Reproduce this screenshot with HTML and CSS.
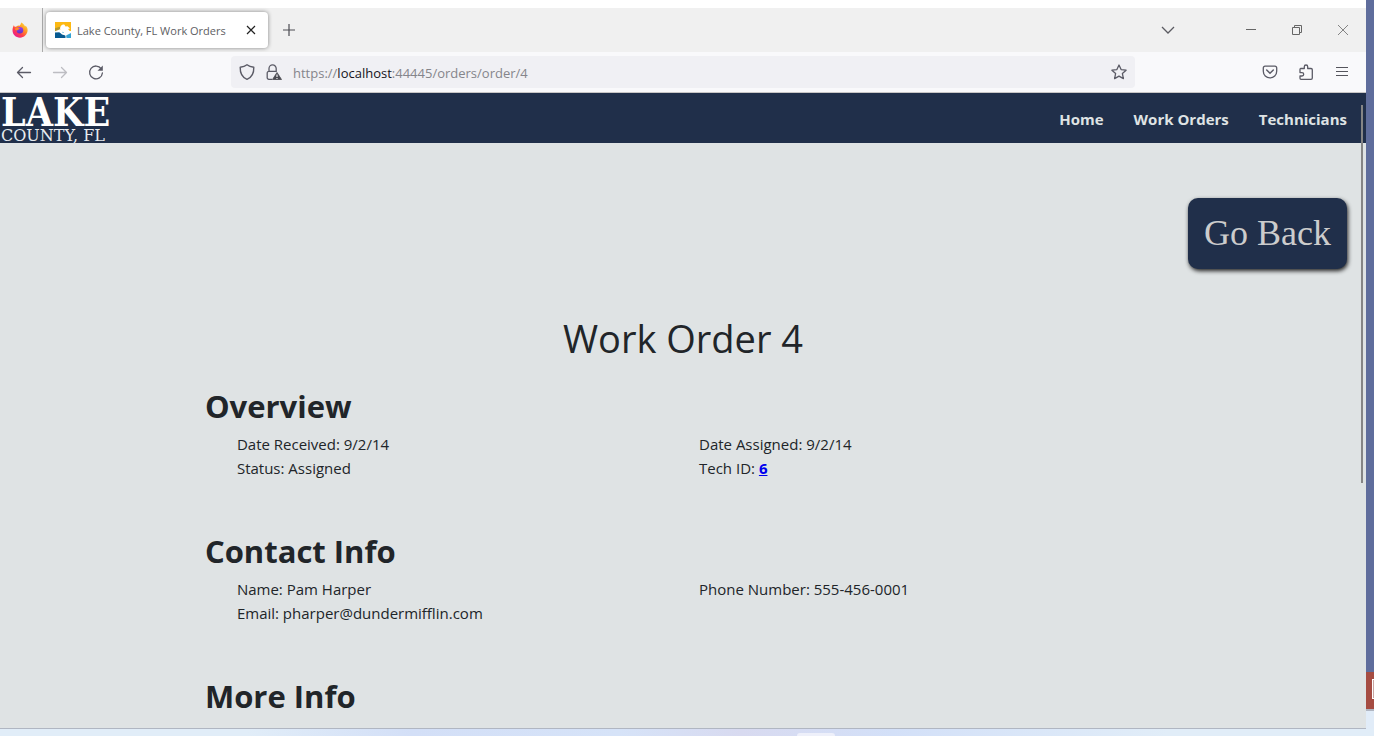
FILE: index.html
```html
<!DOCTYPE html>
<html lang="en">
<head>
<meta charset="utf-8">
<title>Lake County, FL Work Orders</title>
<link rel="stylesheet" href="styles.css">
</head>
<body>
<div class="desktop">
  <div class="browser">
    <div class="tabs">
      <button class="pinned" aria-label="Firefox view">
        <svg width="16" height="16" viewBox="0 0 16 16">
          <defs>
            <linearGradient id="flame" x1="1" y1="0" x2="0.2" y2="1"><stop offset="0" stop-color="#fff04a"/><stop offset=".4" stop-color="#ff9a22"/><stop offset=".7" stop-color="#ff3d4d"/><stop offset="1" stop-color="#e5169b"/></linearGradient>
            <linearGradient id="globe" x1="0" y1="0" x2="0" y2="1"><stop offset="0" stop-color="#a43be8"/><stop offset="1" stop-color="#5a35c9"/></linearGradient>
          </defs>
          <path d="M1.8 3.2 2.9 5 5 4.3 6 3.500 7.500 3.700 8.500 2.500 9.200.4C11 1.300 12.400 2.800 13 4.400L13.800 3.800C15.200 5.300 15.700 7 15.600 8.600 15.300 12.700 12 15.700 8 15.700 3.800 15.700.500 12.500.500 8.300.500 6.300 1 4.800 1.800 3.200Z" fill="url(#flame)"/>
          <circle cx="7.900" cy="8.200" r="3.300" fill="url(#globe)"/>
          <path d="M3.200 6.200 5.500 5.500 8 6.600 6.500 7.600 5 8.500 3.200 8Z" fill="#ff8b25"/>
        </svg>
      </button>
      <div class="tab">
        <svg width="16" height="16" viewBox="0 0 16 16">
          <path d="M0 0h16v16H0Z" fill="#fdb913"/>
          <path d="M0 7.500 5 7 8 9 16 9v7H0Z" fill="#fff"/>
          <path d="M0 6.200 4.500 4.800 6 6 4.500 7.500 0 9.200Z" fill="#b79a2b"/>
          <path d="M0 10.500 4.500 10.300 7 12.500 10.500 13.500V16H0Z" fill="#075a91"/>
          <path d="M11 13.500 16 11v5h-4.500Z" fill="#35a3d5"/>
          <path d="M5 6.500C5.500 3.500 7.500 2 9.500 2.800L10.500 4.500 12.500 4.300 15 6.500 13 7 15.500 10 12.500 9.500 11 14 8.500 11 4.500 10.500 6.500 8.500Z" fill="#fff"/>
          <path d="M7 9.800 9 10.200 8 11Z" fill="#35a3d5"/>
        </svg>
        <span class="tab-title">Lake County, FL Work Orders</span>
        <button class="close" aria-label="Close tab"><svg width="10" height="10" viewBox="0 0 10 10"><path d="M1 1l8 8M9 1 1 9" stroke="#222" stroke-width="1.200"/></svg></button>
      </div>
      <button class="new-tab" aria-label="New tab"><svg width="12" height="12" viewBox="0 0 12 12"><path d="M6 0v12M0 6h12" stroke="#4c4c53" stroke-width="1.200"/></svg></button>
      <div class="window-controls">
        <button class="all-tabs" aria-label="List all tabs"><svg width="14" height="14" viewBox="0 0 14 14"><path d="m1 4 6 6 6-6" fill="none" stroke="#5b5b62" stroke-width="1.300"/></svg></button>
        <button aria-label="Minimize"><svg width="10" height="10" viewBox="0 0 10 10"><path d="M0 4.500h10" stroke="#666"/></svg></button>
        <button aria-label="Restore"><svg width="10" height="10" viewBox="0 0 10 10"><path d="M.5 2.500h7v7h-7ZM2.500 2.500v-2h7v7h-2" fill="none" stroke="#666"/></svg></button>
        <button aria-label="Close window"><svg width="10" height="10" viewBox="0 0 10 10"><path d="m0 0 10 10M10 0 0 10" stroke="#777" stroke-width=".9"/></svg></button>
      </div>
    </div>
    <div class="toolbar">
      <div class="history">
        <button aria-label="Back"><svg width="16" height="16" viewBox="0 0 16 16"><path d="M14.500 8.500H1.500M6.500 3.500 1.500 8.500 6.500 13.500" fill="none" stroke="#5b5b66" stroke-width="1.300" stroke-linecap="round" stroke-linejoin="round"/></svg></button>
        <button aria-label="Forward" disabled><svg width="16" height="16" viewBox="0 0 16 16"><path d="M1.500 8.500h13M9.500 3.500 14.500 8.500 9.500 13.500" fill="none" stroke="#bdbdc2" stroke-width="1.300" stroke-linecap="round" stroke-linejoin="round"/></svg></button>
        <button aria-label="Reload"><svg width="16" height="16" viewBox="0 0 16 16"><path d="M13.300 4.800A6.400 6.400 0 1 0 14.400 9" fill="none" stroke="#5b5b66" stroke-width="1.300" stroke-linecap="round"/><path d="M14.800 1.500v5.300H9.500Z" fill="#5b5b66"/></svg></button>
      </div>
      <div class="address">
        <svg width="16" height="16" viewBox="0 0 16 16"><path d="M8 .800C6 2.300 3.800 2.900 1.200 3.200 1 9.500 3 13.300 8 15.300 13 13.300 15 9.500 14.800 3.200 12.200 2.900 10 2.300 8 .800Z" fill="none" stroke="#5b5b66" stroke-width="1.400" stroke-linejoin="round"/></svg>
        <svg class="lock" width="16" height="16" viewBox="0 0 16 16"><path d="M6 15.300H2.800A1.600 1.600 0 0 1 1.200 13.700V9A1.600 1.600 0 0 1 2.800 7.400H10M3 7.400V4.500a3.600 3.600 0 0 1 7.200 0V8" fill="none" stroke="#5b5b66" stroke-width="1.300"/><path d="M11 8.500 15.500 15.500H6.500Z" fill="#4b4b52" stroke="#4b4b52" stroke-linejoin="round" stroke-width=".8"/><path d="M11 10.500v2.500M11 14v1" stroke="#fff" stroke-width="1.100"/></svg>
        <a class="url" href="#">https://<b>localhost</b>:44445/orders/order/4</a>
        <button class="star" aria-label="Bookmark this page"><svg width="16" height="16" viewBox="0 0 16 16"><path d="m8 1 2.100 4.600 5 .600-3.700 3.400 1 5L8 12.100l-4.400 2.500 1-5L.900 6.200l5-.6Z" fill="none" stroke="#5b5b66" stroke-width="1.300" stroke-linejoin="round"/></svg></button>
      </div>
      <div class="tools">
        <button aria-label="Save to Pocket"><svg width="16" height="16" viewBox="0 0 16 16"><path d="M3 2.200h10a1.700 1.700 0 0 1 1.700 1.700v3.300a6.700 6.700 0 0 1-13.400 0V3.900A1.700 1.700 0 0 1 3 2.200Z" fill="none" stroke="#5b5b66" stroke-width="1.300"/><path d="M4.700 6 8 9.200 11.300 6" fill="none" stroke="#5b5b66" stroke-width="1.500" stroke-linecap="round"/></svg></button>
        <button aria-label="Extensions"><svg width="16" height="16" viewBox="0 0 16 16"><path d="M2.500 4.500H6.300V2.700a1.700 1.700 0 0 1 3.400 0V4.500H13a1.300 1.300 0 0 1 1.300 1.300v8.200a1.300 1.300 0 0 1-1.300 1.300H3a1 1 0 0 1-1-1V12H4a1.700 1.700 0 0 0 0-3.400H2V5.500a.8.800 0 0 1 .5-1Z" fill="none" stroke="#5b5b66" stroke-width="1.300" stroke-linejoin="round"/></svg></button>
        <button aria-label="Menu"><svg width="12" height="12" viewBox="0 0 12 12"><path d="M0 1.500h12M0 5.500h12M0 9.500h12" stroke="#55555c" stroke-width="1.200"/></svg></button>
      </div>
    </div>
    <div class="page">
      <header class="site-header">
        <a class="logo" href="#" aria-label="Lake County, FL">
          <svg width="112" height="50" viewBox="0 0 112 50">
            <text class="logo-name" x="1" y="33">LAKE</text>
            <text class="logo-place" x="1" y="48">COUNTY, FL</text>
          </svg>
        </a>
        <nav class="site-nav"><a href="#">Home</a><a href="#">Work Orders</a><a href="#">Technicians</a></nav>
      </header>
      <main>
        <div class="actions"><button class="go-back">Go Back</button></div>
        <h1>Work Order 4</h1>
        <div class="order">
          <section>
            <h2>Overview</h2>
            <div class="fields"><span>Date Received: 9/2/14</span><span>Date Assigned: 9/2/14</span><span>Status: Assigned</span><span>Tech ID: <a href="#">6</a></span></div>
          </section>
          <section>
            <h2>Contact Info</h2>
            <div class="fields"><span>Name: Pam Harper</span><span>Phone Number: 555-456-0001</span><span>Email: pharper@dundermifflin.com</span></div>
          </section>
          <section><h2>More Info</h2></section>
        </div>
      </main>
      <div class="scroll-thumb"></div>
    </div>
  </div>
  <div class="behind"><div class="behind-red"><i></i></div></div>
  <div class="taskbar"><div class="task-item"></div></div>
</div>
</body>
</html>
```
FILE: styles.css
```css
* { box-sizing: border-box; }
body { margin: 0; font-family: "Open Sans", "Noto Sans", sans-serif; color: #212529; }
button { border: 0; padding: 0; background: none; font: inherit; color: inherit; display: flex; align-items: center; justify-content: center; }
svg { display: block; flex: none; overflow: visible; }

.desktop {
  height: 100vh;
  display: grid;
  grid-template: minmax(0, 1fr) 7px / minmax(0, 1fr) 8px;
  background: #fff;
  overflow: hidden;
}
.browser { display: flex; flex-direction: column; margin-top: 8px; border-bottom: 1px solid #b0b6c2; }

.tabs { flex: none; height: 44px; display: flex; align-items: center; background: #f0f0f0; }
.pinned { width: 43px; height: 44px; padding-right: 3px; border-right: 1px solid #aaa; }
.tab {
  display: flex;
  align-items: center;
  gap: 6px;
  width: 222px;
  height: 36px;
  margin-left: 3px;
  padding: 0 7px 0 9px;
  background: #fff;
  border-radius: 4px;
  box-shadow: 0 0 4px rgba(0, 0, 0, .45);
}
.tab-title { flex: 1; font-size: 11px; color: #5e5e63; white-space: nowrap; }
.close { width: 20px; height: 20px; }
.new-tab { width: 32px; height: 32px; margin-left: 5px; }
.window-controls { margin-left: auto; display: flex; }
.window-controls button { width: 46px; height: 44px; }
.window-controls .all-tabs { margin-right: 37px; }

.toolbar { flex: none; height: 41px; display: flex; align-items: center; background: #f9f9fb; border-bottom: 1px solid #c8c6c6; }
.history { display: flex; gap: 4px; flex: 1; padding-left: 8px; }
.history button { width: 32px; height: 32px; }
.address { display: flex; align-items: center; width: 904px; height: 32px; padding: 0 8px; background: #f0f0f4; border-radius: 4px; }
.lock { margin-left: 11px; }
.url { flex: 1; margin-left: 11px; font-size: 13px; line-height: 20px; padding-top: 2px; color: #85858b; text-decoration: none; white-space: nowrap; }
.url b { font-weight: 400; color: #15141a; }
.tools { display: flex; justify-content: flex-end; gap: 4px; flex: 1; padding-right: 8px; }
.tools button { width: 32px; height: 32px; }

.page { position: relative; flex: 1; min-height: 0; overflow: hidden; background: #dfe3e4; }
.site-header { height: 50px; display: flex; align-items: center; justify-content: space-between; background: #202f4a; }
.logo-name { font: 700 39px "DejaVu Serif Condensed", "DejaVu Serif", serif; fill: #fff; }
.logo-place { font: 16px "DejaVu Serif", serif; fill: #e8ebef; }
.site-nav { display: flex; gap: 30px; padding: 2px 19px 0 0; }
.site-nav a { font-size: 15px; font-weight: 700; line-height: 24px; color: #dfe3e4; text-decoration: none; }

.actions { display: flex; justify-content: flex-end; padding: 55px 19px 45px; }
.go-back {
  padding: 15px 16px;
  font: 36px/41px "Liberation Serif", serif;
  color: #ccc;
  background: #202f4a;
  border-radius: 10px;
  box-shadow: 1px 2px 4px #222;
}
h1 { margin: 0 0 25px; font-size: 38px; font-weight: 400; line-height: 48px; text-align: center; }
.order { width: 70%; margin: 0 auto; display: grid; gap: 52px; }
h2 { margin: 0 0 7px; font-size: 31px; font-weight: 700; line-height: 38px; }
.fields { display: grid; grid-template-columns: 1fr 1fr; padding-left: 32px; font-size: 15px; line-height: 24px; }
.fields a { font-weight: 700; color: #00e; }
.scroll-thumb { position: absolute; top: 12px; right: 3px; width: 2px; height: 378px; background: #858585; }

.behind { display: flex; flex-direction: column; justify-content: flex-end; padding-bottom: 18px; background: linear-gradient(#5f6d9c, #5f6d9c) top / 100% calc(100% - 18px) no-repeat #e1ecf8; }
.behind-red { height: 39px; background: #a54c42; border-bottom: 2px solid #b0b6c2; padding: 7px 0 0 6px; }
.behind-red i { display: block; height: 20px; border: 1px solid #fff; border-right: 0; background: #c9a5a2; }
.taskbar { grid-column: 1 / -1; display: flex; justify-content: center; align-items: flex-end; padding-left: 258px; background: linear-gradient(90deg, #e1edf8 0 18%, #d3dff7 30%, #d6e3f8 45%, #d8daf0 54%, #d3e0f8 65%, #e1edf8 85%); }
.task-item { width: 38px; height: 3px; background: #eef0fa; border-radius: 3px 3px 0 0; }
```
